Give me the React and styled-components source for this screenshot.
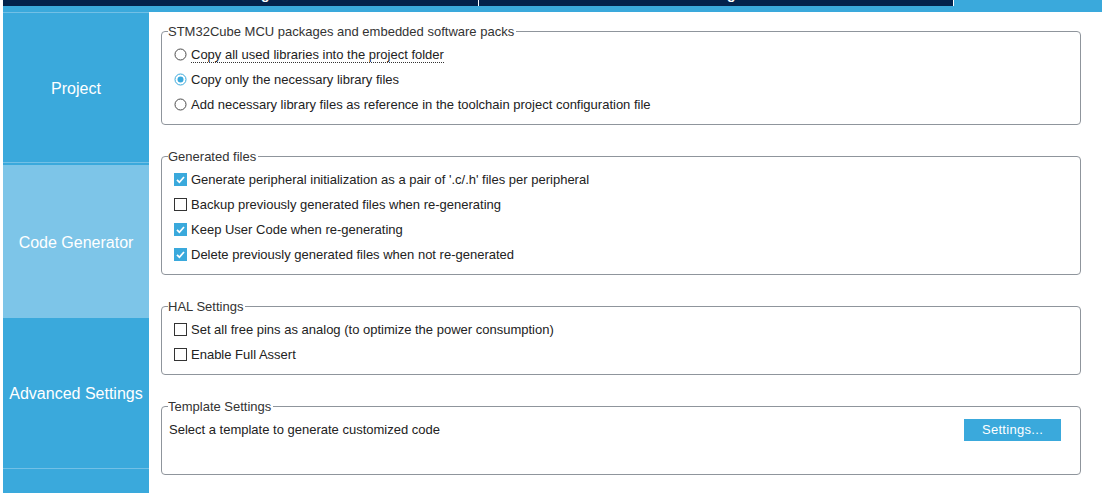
import React from 'react';
import styled, { createGlobalStyle } from 'styled-components';

const GlobalStyle = createGlobalStyle`
  html, body, #root {
    margin: 0;
    height: 100%;
  }
  body {
    font-family: 'Liberation Sans', Arial, sans-serif;
    background: #fff;
    overflow: hidden;
  }
`;

const BLUE = '#3aa9dc';
const LIGHT = '#7dc5e8';
const LINE = '#72c0e6';
const NAVY = '#03224c';

const tabs = [
  { label: 'Pinout & Configuration', width: 475 },
  { label: 'Clock Configuration', width: 474 },
  { label: 'Project Manager', width: 475, active: true },
];

const navItems = [
  { label: 'Project', height: 150 },
  { label: 'Code Generator', height: 155, active: true },
  { label: 'Advanced Settings', height: 151 },
];

const App = () => {
  return (
    <Page>
      <GlobalStyle />
      <TabBar>
        {tabs.map((tab) => (
          <Tab key={tab.label} $width={tab.width} $active={tab.active}>
            <TabLabel>{tab.label}</TabLabel>
          </Tab>
        ))}
      </TabBar>
      <Band />
      <Body>
        <Sidebar>
          {navItems.map((item) => (
            <NavItem key={item.label} $height={item.height} $active={item.active}>
              {item.label}
            </NavItem>
          ))}
        </Sidebar>
        <Main>
          <Group>
            <Legend>STM32Cube MCU packages and embedded software packs</Legend>
            <Row>
              <Radio />
              <FocusLabel>Copy all used libraries into the project folder</FocusLabel>
            </Row>
            <Row>
              <Radio checked />
              <span>Copy only the necessary library files</span>
            </Row>
            <Row>
              <Radio />
              <span>Add necessary library files as reference in the toolchain project configuration file</span>
            </Row>
          </Group>

          <Group>
            <Legend>Generated files</Legend>
            <Row>
              <Check checked />
              <span>Generate peripheral initialization as a pair of '.c/.h' files per peripheral</span>
            </Row>
            <Row>
              <Check />
              <span>Backup previously generated files when re-generating</span>
            </Row>
            <Row>
              <Check checked />
              <span>Keep User Code when re-generating</span>
            </Row>
            <Row>
              <Check checked />
              <span>Delete previously generated files when not re-generated</span>
            </Row>
          </Group>

          <Group>
            <Legend>HAL Settings</Legend>
            <Row>
              <Check />
              <span>Set all free pins as analog (to optimize the power consumption)</span>
            </Row>
            <Row>
              <Check />
              <span>Enable Full Assert</span>
            </Row>
          </Group>

          <Group $padBottom={32}>
            <Legend>Template Settings</Legend>
            <TemplateRow>
              <span>Select a template to generate customized code</span>
              <SettingsButton type="button">Settings...</SettingsButton>
            </TemplateRow>
          </Group>
        </Main>
      </Body>
    </Page>
  );
};

const Radio = ({ checked }) => (
  <Control width="13" height="13" viewBox="0 0 13 13">
    {checked ? (
      <>
        <circle cx="6.5" cy="6.5" r="5.5" fill="#fff" stroke={BLUE} strokeWidth="1" />
        <circle cx="6.5" cy="6.5" r="3" fill={BLUE} />
      </>
    ) : (
      <circle cx="6.5" cy="6.5" r="5.5" fill="#fff" stroke="#4a4a4a" strokeWidth="1" />
    )}
  </Control>
);

const Check = ({ checked }) => (
  <Control width="13" height="13" viewBox="0 0 13 13">
    {checked ? (
      <>
        <rect x="0" y="0" width="13" height="13" fill={BLUE} />
        <polyline
          points="3,6.8 5.4,9.2 10,4"
          fill="none"
          stroke="#fff"
          strokeWidth="1.7"
        />
      </>
    ) : (
      <rect x="0.5" y="0.5" width="12" height="12" fill="#fff" stroke="#333" strokeWidth="1" />
    )}
  </Control>
);

export default App;

const Page = styled.div`
  height: 100vh;
  display: flex;
  flex-direction: column;
  padding-left: 3px;
  box-sizing: border-box;
  overflow: hidden;
`;

const TabBar = styled.div`
  display: flex;
  gap: 1px;
  height: 6px;
  flex: none;
  overflow: hidden;
`;

const Tab = styled.div`
  flex: 0 0 ${(p) => p.$width}px;
  height: 6px;
  box-sizing: border-box;
  padding-bottom: 5px;
  display: flex;
  justify-content: center;
  align-items: flex-end;
  overflow: hidden;
  background: ${(p) => (p.$active ? BLUE : NAVY)};
  color: #fff;
`;

const TabLabel = styled.span`
  font-size: 14px;
  line-height: 14px;
  font-weight: bold;
  white-space: nowrap;
`;

const Band = styled.div`
  height: 6px;
  flex: none;
  background: ${BLUE};
`;

const Body = styled.div`
  flex: 1;
  display: flex;
  min-height: 0;
`;

const Sidebar = styled.nav`
  width: 146px;
  flex: none;
  display: flex;
  flex-direction: column;
  background: ${BLUE};
  border-top: 1px solid ${LINE};
`;

const NavItem = styled.div`
  height: ${(p) => p.$height}px;
  box-sizing: border-box;
  padding-top: 2px;
  flex: none;
  display: flex;
  align-items: center;
  justify-content: center;
  color: #fff;
  font-size: 16px;
  white-space: nowrap;
  background: ${(p) => (p.$active ? LIGHT : BLUE)};
  border-top: ${(p) => (p.$active ? `2px solid ${BLUE}` : 'none')};
  border-bottom: ${(p) => (p.$active ? 'none' : `1px solid ${LINE}`)};
`;

const Main = styled.main`
  flex: 1;
  display: flex;
  flex-direction: column;
  gap: 24px;
  padding: 12px 21px 0 12px;
  min-width: 0;
`;

const Group = styled.fieldset`
  margin: 0;
  min-width: 0;
  border: 1px solid #8f959c;
  border-radius: 4px;
  padding: 3px 7px ${(p) => p.$padBottom ?? 7}px;
  font-size: 13px;
  color: #222;
`;

const Legend = styled.legend`
  margin-left: -1px;
  padding: 0 2px 0 0;
  font-size: 13px;
  line-height: 15px;
  color: #333;
`;

const Row = styled.div`
  display: flex;
  align-items: center;
  gap: 4px;
  height: 25px;
  padding-left: 5px;
  white-space: nowrap;
`;

const Control = styled.svg`
  flex: none;
  display: block;
`;

const FocusLabel = styled.span`
  border-bottom: 1px dotted #333;
  line-height: 15px;
`;

const TemplateRow = styled.div`
  display: flex;
  align-items: center;
  justify-content: space-between;
  height: 25px;
`;

const SettingsButton = styled.button`
  width: 97px;
  height: 22px;
  margin-right: 12px;
  border: none;
  padding: 0;
  background: ${BLUE};
  color: #fff;
  font-family: 'Liberation Sans', Arial, sans-serif;
  font-size: 13px;
  letter-spacing: 0.3px;
`;
